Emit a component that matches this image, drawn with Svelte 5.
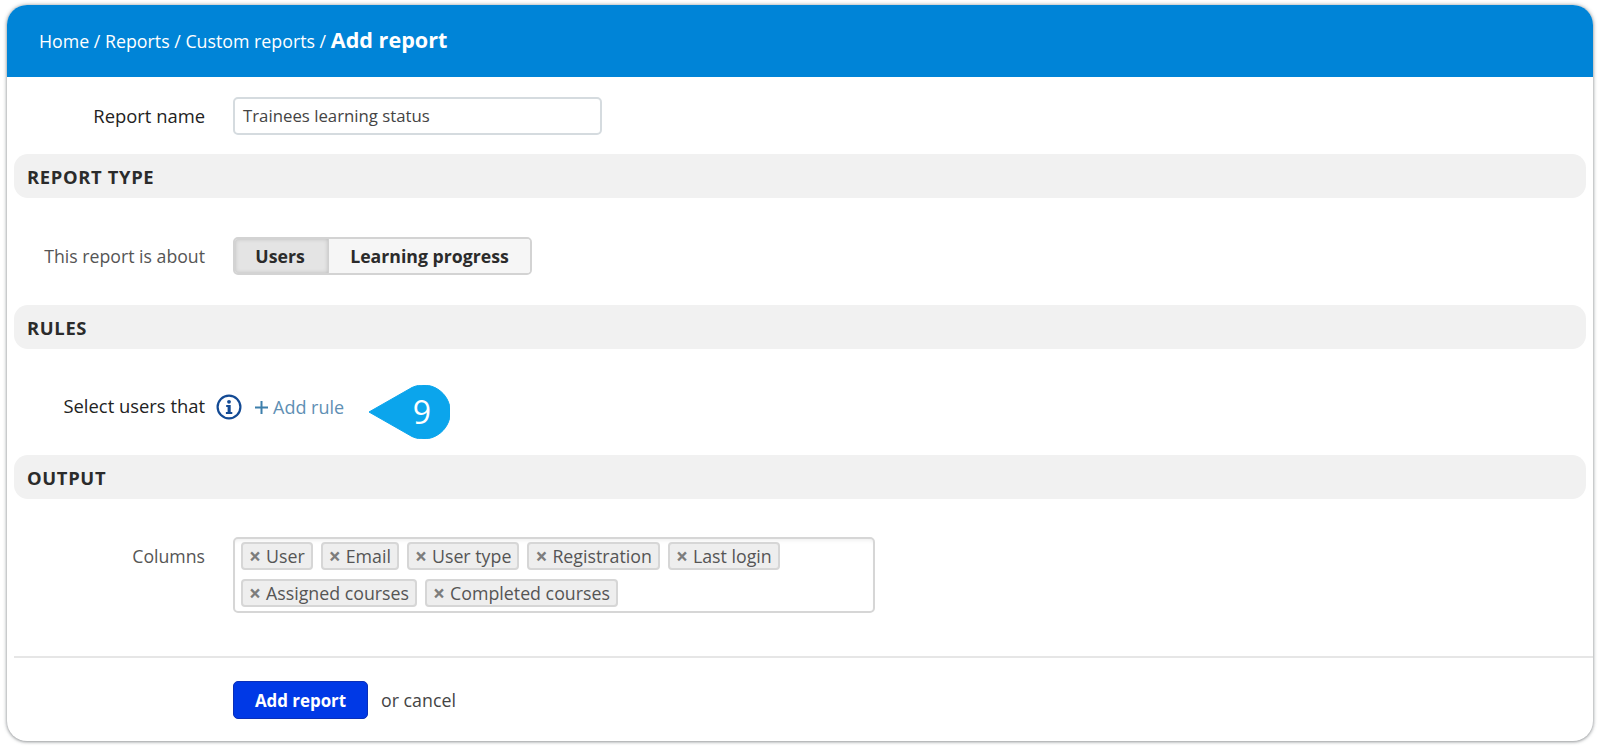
<script>
  const columns = [
    ['User', 'Email', 'User type', 'Registration', 'Last login'],
    ['Assigned courses', 'Completed courses']
  ];
</script>

<div class="page">
  <div class="card">
    <header class="crumbs">
      <div>Home / Reports / Custom reports / <strong>Add report</strong></div>
    </header>

    <div class="row name-row">
      <div class="label dark">Report name</div>
      <div class="name-input">Trainees learning status</div>
    </div>

    <div class="section">REPORT TYPE</div>
    <div class="row type-row">
      <div class="label">This report is about</div>
      <div class="toggle">
        <div class="toggle-btn active">Users</div>
        <div class="toggle-btn">Learning progress</div>
      </div>
    </div>

    <div class="section">RULES</div>
    <div class="row rules-row">
      <div class="label dark">Select users that</div>
      <div class="rule-tools">
        <svg class="info" width="26" height="26" viewBox="0 0 26 26">
          <circle cx="13" cy="13" r="11.4" fill="none" stroke="#134a94" stroke-width="2.2" />
          <circle cx="13" cy="7.8" r="1.9" fill="#134a94" />
          <path d="M10.2 11h4.5v7h1.6v1.9H9.9V18h1.7v-5.1H10.2z" fill="#134a94" />
        </svg>
        <svg class="plus" width="15" height="15" viewBox="0 0 15 15">
          <path d="M7.5 1v13M1 7.5h13" stroke="#3d7fab" stroke-width="2" fill="none" />
        </svg>
        <span class="add-rule">Add rule</span>
        <div class="callout">
          <svg width="82" height="54" viewBox="0 0 82 54">
            <path d="M1 27 L44 2.5 A27 27 0 1 1 44 51.5 Z" fill="#0ba5ec" stroke="#0ba5ec" stroke-linejoin="round" />
          </svg>
          <span class="callout-num">9</span>
        </div>
      </div>
    </div>

    <div class="section">OUTPUT</div>
    <div class="row columns-row">
      <div class="label">Columns</div>
      <div class="tags">
        {#each columns as line}
          <div class="tag-line">
            {#each line as c}
              <span class="tag"><span class="x">×</span>{c}</span>
            {/each}
          </div>
        {/each}
      </div>
    </div>

    <div class="footer">
      <div class="submit">Add report</div>
      <span class="cancel">or cancel</span>
    </div>
  </div>
</div>

<style>
  :global(body) {
    margin: 0;
    background: #fff;
  }

  .page {
    width: 1600px;
    height: 749px;
    padding: 5px 7px 8px;
    box-sizing: border-box;
    font-family: "Open Sans", "Noto Sans", sans-serif;
    color: #333;
  }

  .card {
    height: 736px;
    background: #fff;
    border-radius: 20px;
    box-shadow: 0 0 4px rgba(60, 70, 80, 0.45), 0 1px 3px rgba(0, 0, 0, 0.25);
    overflow: hidden;
    padding-bottom: 22px;
    box-sizing: border-box;
  }

  .crumbs {
    height: 72px;
    background: #0084d7;
    color: #fff;
    display: flex;
    align-items: center;
    padding-left: 32px;
    padding-bottom: 4px;
    box-sizing: border-box;
    font-size: 17.8px;
    white-space: pre;
  }

  .crumbs strong {
    font-size: 21.6px;
    font-weight: 700;
  }

  .row {
    display: flex;
    align-items: center;
  }

  .label {
    width: 198px;
    margin-right: 28px;
    text-align: right;
    font-size: 17.7px;
    color: #555;
    flex-shrink: 0;
  }

  .label.dark {
    color: #222;
    font-size: 18.4px;
    font-weight: 500;
  }

  .name-row {
    padding: 20px 0 19px;
  }

  .name-row .label {
    position: relative;
    top: -1px;
  }

  .name-input {
    width: 369px;
    height: 38px;
    box-sizing: border-box;
    border: 2px solid #d5dbdf;
    border-radius: 5px;
    padding-left: 8px;
    padding-bottom: 1px;
    display: flex;
    align-items: center;
    font-size: 16.8px;
    color: #444;
  }

  .section {
    margin: 0 7px;
    height: 44px;
    box-sizing: border-box;
    background: #f1f1f1;
    border-radius: 14px;
    padding-left: 13px;
    display: flex;
    align-items: center;
    font-size: 18.4px;
    font-weight: 700;
    letter-spacing: 0.65px;
    color: #2b2b2b;
  }

  .type-row {
    padding: 39px 0 30px;
  }

  .toggle {
    display: flex;
    height: 38px;
    box-sizing: border-box;
    border: 2px solid #d3d3d3;
    border-radius: 5px;
    overflow: hidden;
    font-size: 17.7px;
    font-weight: 700;
    color: #2b2b2b;
  }

  .toggle-btn {
    display: flex;
    align-items: center;
    justify-content: center;
    width: 201px;
    background: #f6f6f6;
  }

  .toggle-btn.active {
    width: 94px;
    padding-right: 3px;
    box-sizing: border-box;
    background: #e4e4e4;
    box-shadow: inset 0 0 4px rgba(0, 0, 0, 0.18);
    border-right: 1px solid #d0d0d0;
  }

  .rules-row {
    height: 106px;
    box-sizing: border-box;
    padding-top: 10px;
  }

  .rules-row .label {
    position: relative;
    top: -2px;
  }

  .rule-tools {
    position: relative;
    display: flex;
    align-items: center;
    margin-left: -17px;
  }

  .info {
    flex-shrink: 0;
  }

  .plus {
    margin-left: 12px;
    flex-shrink: 0;
  }

  .add-rule {
    margin-left: 4px;
    font-size: 18px;
    color: #5f8fb4;
  }

  .callout {
    position: absolute;
    left: 152px;
    top: -9px;
    width: 82px;
    height: 54px;
  }

  .callout-num {
    position: absolute;
    left: 44px;
    top: 2px;
    width: 20px;
    text-align: center;
    color: #fff;
    font-size: 32px;
    line-height: 50px;
  }

  .columns-row {
    padding: 38px 0 43px;
    align-items: flex-start;
  }

  .columns-row .label {
    padding-top: 7px;
  }

  .tags {
    width: 642px;
    height: 76px;
    box-sizing: border-box;
    border: 2px solid #d6d6d6;
    border-radius: 5px;
    padding: 3px 0 0 6px;
    box-shadow: inset 0 4px 4px -3px rgba(0, 0, 0, 0.08);
  }

  .tag-line {
    display: flex;
    gap: 8px;
    margin-bottom: 9px;
  }

  .tag {
    height: 28px;
    box-sizing: border-box;
    display: flex;
    align-items: center;
    padding: 0 6px;
    border: 2px solid #d6d6d6;
    border-radius: 4px;
    background: #eeeeee;
    font-size: 17.8px;
    color: #555;
    white-space: nowrap;
  }

  .x {
    font-size: 21px;
    font-weight: 700;
    color: #7d7d7d;
    margin-right: 5px;
    line-height: 1;
  }

  .footer {
    border-top: 2px solid #e6e6e6;
    margin-left: 7px;
    padding: 23px 0 0 219px;
    display: flex;
    align-items: center;
  }

  .submit {
    width: 135px;
    height: 38px;
    box-sizing: border-box;
    background: #0039e6;
    border: 1px solid #0a2fb8;
    border-radius: 5px;
    color: #fff;
    font-size: 16.9px;
    font-weight: 700;
    display: flex;
    align-items: center;
    justify-content: center;
  }

  .cancel {
    margin-left: 13px;
    font-size: 17.8px;
    color: #444;
  }
</style>
